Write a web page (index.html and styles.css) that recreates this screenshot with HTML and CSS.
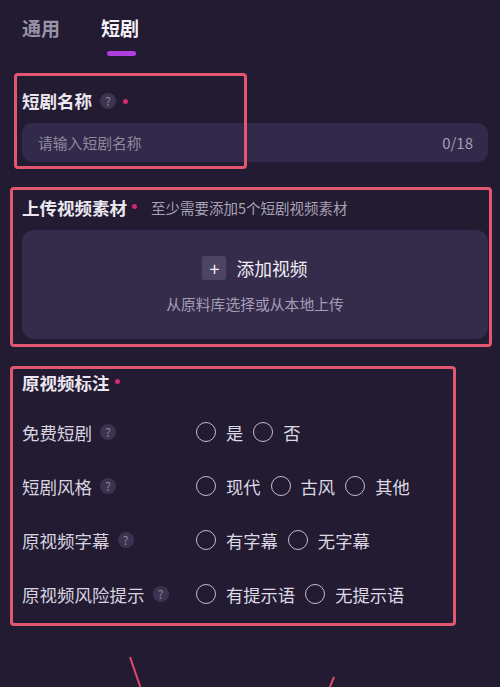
FILE: index.html
```html
<!DOCTYPE html>
<html lang="zh">
<head>
<meta charset="utf-8">
<title>短剧</title>
<link rel="stylesheet" href="styles.css">
</head>
<body>
<div class="page">
  <nav class="tabs">
    <div class="tab">通用</div>
    <div class="tab active">短剧<span class="bar"></span></div>
  </nav>

  <section class="sec sec-name">
    <div class="mark mark1"></div>
    <div class="title">短剧名称<span class="help">?</span><span class="dot"></span></div>
    <div class="input"><span class="ph">请输入短剧名称</span><span class="count">0/18</span></div>
  </section>

  <section class="sec sec-upload">
    <div class="mark mark2"></div>
    <div class="title">上传视频素材<span class="dot tight"></span><span class="hint">至少需要添加5个短剧视频素材</span></div>
    <div class="upload">
      <div class="add"><span class="plus">+</span>添加视频</div>
      <div class="sub">从原料库选择或从本地上传</div>
    </div>
  </section>

  <section class="sec sec-tags">
    <div class="mark mark3"></div>
    <div class="title">原视频标注<span class="dot tight"></span></div>
    <div class="row"><div class="label">免费短剧<span class="help">?</span></div><div class="opts"><span class="radio"></span><span class="opt">是</span><span class="radio"></span><span class="opt">否</span></div></div>
    <div class="row"><div class="label">短剧风格<span class="help">?</span></div><div class="opts"><span class="radio"></span><span class="opt">现代</span><span class="radio"></span><span class="opt">古风</span><span class="radio"></span><span class="opt">其他</span></div></div>
    <div class="row"><div class="label">原视频字幕<span class="help">?</span></div><div class="opts"><span class="radio"></span><span class="opt">有字幕</span><span class="radio"></span><span class="opt">无字幕</span></div></div>
    <div class="row"><div class="label">原视频风险提示<span class="help">?</span></div><div class="opts"><span class="radio"></span><span class="opt">有提示语</span><span class="radio"></span><span class="opt">无提示语</span></div></div>
  </section>

  <svg class="arrows" width="500" height="60" viewBox="0 0 500 60">
    <line x1="130" y1="30" x2="141" y2="62" stroke="#e04a6c" stroke-width="2"/>
    <line x1="334" y1="50" x2="329" y2="62" stroke="#e04a6c" stroke-width="2"/>
  </svg>
</div>
</body>
</html>
```

FILE: styles.css
```css
html, body {
  margin: 0;
  padding: 0;
  background: #231b31;
}
body {
  font-family: "Noto Sans CJK SC", "Noto Sans", sans-serif;
  color: #e6e2ec;
}
.page {
  position: relative;
  width: 500px;
  height: 687px;
  overflow: hidden;
}
.tabs {
  display: flex;
  gap: 41px;
  padding: 14px 22px 0;
}
.tab {
  position: relative;
  font-size: 19px;
  font-weight: 700;
  line-height: 28px;
  color: #9893a6;
  height: 42px;
}
.tab.active { color: #f4f1f7; }
.tab .bar {
  position: absolute;
  left: 6px;
  top: 37px;
  width: 29px;
  height: 5px;
  border-radius: 3px;
  background: #b23de0;
}
.sec {
  position: relative;
  padding: 0 12px 0 22px;
}
.sec-name { margin-top: 33px; }
.sec-upload { margin-top: 34px; }
.sec-tags { margin-top: 32px; }
.mark {
  position: absolute;
  border: 3px solid #e2566f;
  border-radius: 4px;
  box-sizing: border-box;
  pointer-events: none;
}
.mark1 { left: 14px; top: -16px; width: 233px; height: 96px; }
.mark2 { left: 10px; top: -9px; width: 482px; height: 160px; }
.mark3 { left: 10px; top: -5px; width: 446px; height: 260px; }
.title {
  display: flex;
  align-items: center;
  font-size: 17.5px;
  font-weight: 700;
  line-height: 24px;
  color: #ebe7f0;
}
.help {
  display: inline-flex;
  align-items: center;
  justify-content: center;
  width: 16px;
  height: 16px;
  margin-left: 8px;
  border-radius: 50%;
  background: #3b3350;
  color: #8c869c;
  font-size: 12px;
  font-weight: 400;
  line-height: 1;
}
.dot {
  width: 5px;
  height: 5px;
  margin-left: 7px;
  border-radius: 50%;
  background: #d42a6c;
}
.dot.tight { margin-left: 5px; margin-top: -4px; }
.hint {
  margin-left: 14px;
  font-size: 14.5px;
  font-weight: 400;
  color: #a8a2b6;
}
.input {
  display: flex;
  justify-content: space-between;
  align-items: center;
  margin-top: 10px;
  height: 39px;
  padding: 0 15px 0 16px;
  border-radius: 10px;
  background: #33294a;
  font-size: 14.8px;
}
.ph { color: #8f899f; }
.count { color: #a49eb5; font-size: 15px; }
.upload {
  margin-top: 10px;
  height: 109px;
  border-radius: 12px;
  background: #352c4c;
  display: flex;
  flex-direction: column;
  align-items: center;
  justify-content: flex-start;
}
.add {
  display: flex;
  align-items: center;
  margin-top: 26px;
  font-size: 17.8px;
  line-height: 24px;
  color: #f1eef5;
}
.plus {
  display: inline-flex;
  align-items: center;
  justify-content: center;
  width: 24px;
  height: 24px;
  margin-right: 10px;
  border-radius: 3px;
  background: #4b4462;
  color: #f2eff6;
  font-size: 18px;
  line-height: 1;
}
.sub {
  margin-top: 13px;
  font-size: 14.8px;
  color: #a49eb4;
}
.sec-tags .title { margin-bottom: 10px; }
.row {
  display: flex;
  align-items: center;
  height: 54px;
}
.label {
  display: flex;
  align-items: center;
  width: 174px;
  font-size: 17.5px;
  color: #d8d3e0;
}
.opts {
  display: flex;
  align-items: center;
  font-size: 17.3px;
  color: #dcd8e4;
}
.radio {
  width: 20px;
  height: 20px;
  box-sizing: border-box;
  border: 1.5px solid #c4bfcf;
  border-radius: 50%;
  margin-right: 10px;
}
.opt { margin-right: 10px; }
.arrows {
  position: absolute;
  left: 0;
  bottom: 0;
}
```
